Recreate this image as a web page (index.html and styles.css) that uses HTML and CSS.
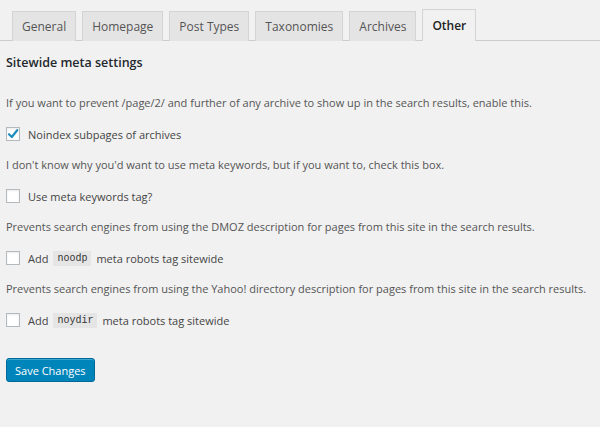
FILE: index.html
```html
<!DOCTYPE html>
<html>
<head>
<meta charset="utf-8">
<link rel="stylesheet" href="styles.css">
</head>
<body>
<div class="wrap">
  <nav class="tabs">
    <a class="tab">General</a>
    <a class="tab">Homepage</a>
    <a class="tab">Post Types</a>
    <a class="tab">Taxonomies</a>
    <a class="tab">Archives</a>
    <a class="tab active">Other</a>
  </nav>
  <div class="content">
    <h2 class="title">Sitewide meta settings</h2>
    <p class="desc">If you want to prevent /page/2/ and further of any archive to show up in the search results, enable this.</p>
    <label class="check"><span class="box checked"><svg viewBox="0 0 14 14" width="14" height="14"><path d="M3 7.2 L5.8 10 L11.2 3.2" fill="none" stroke="#1e8cbe" stroke-width="2.2" stroke-linecap="round" stroke-linejoin="round"/></svg></span>Noindex subpages of archives</label>
    <p class="desc">I don't know why you'd want to use meta keywords, but if you want to, check this box.</p>
    <label class="check"><span class="box"></span>Use meta keywords tag?</label>
    <p class="desc">Prevents search engines from using the DMOZ description for pages from this site in the search results.</p>
    <label class="check"><span class="box"></span>Add <code>noodp</code> meta robots tag sitewide</label>
    <p class="desc">Prevents search engines from using the Yahoo! directory description for pages from this site in the search results.</p>
    <label class="check"><span class="box"></span>Add <code>noydir</code> meta robots tag sitewide</label>
    <div class="actions"><button class="btn">Save Changes</button></div>
  </div>
</div>
</body>
</html>
```

FILE: styles.css
```css
html, body {
  margin: 0;
  padding: 0;
  background: #f1f1f1;
}
body {
  font-family: "Open Sans", "Noto Sans", sans-serif;
  color: #444;
  font-size: 11px;
}
.tabs {
  display: flex;
  align-items: flex-end;
  padding: 9px 0 0 6px;
  border-bottom: 1px solid #ccc;
  height: 31px;
}
.tab {
  display: block;
  margin-left: 6px;
  padding: 0 9px;
  height: 30px;
  line-height: 30px;
  font-size: 12px;
  font-weight: 500;
  color: #555;
  background: #e4e4e4;
  border: 1px solid #d4d4d4;
  border-bottom: none;
  margin-bottom: -1px;
  box-sizing: border-box;
}
.tab.active {
  background: #f1f1f1;
  color: #222;
  font-weight: 600;
  height: 32px;
  line-height: 32px;
}
.content {
  padding: 0 6px;
}
.title {
  margin: 0;
  padding-top: 13px;
  padding-bottom: 7px;
  font-size: 12.5px;
  font-weight: 600;
  color: #23282d;
  line-height: 18px;
}
.desc {
  margin: 0;
  line-height: 16px;
  padding-top: 16px;
  color: #555;
}
.check {
  display: flex;
  align-items: center;
  height: 16px;
  margin-top: 15px;
  margin-bottom: -1px;
  color: #444;
}
.box {
  width: 14px;
  height: 14px;
  box-sizing: border-box;
  border: 1px solid #b4b9be;
  background: #fff;
  margin-right: 8px;
  box-shadow: inset 0 1px 2px rgba(0,0,0,.08);
  display: flex;
}
.box svg { display: block; margin: -1px; }
code {
  font-family: "Liberation Mono", "DejaVu Sans Mono", monospace;
  font-size: 10px;
  background: #e5e5e5;
  padding: 2px 4px;
  margin: 0 5px;
  color: #333;
}
.actions {
  padding-top: 31px;
}
.btn {
  font-family: "Open Sans", sans-serif;
  font-size: 11px;
  height: 24px;
  padding: 0 8px;
  color: #fff;
  background: #0085ba;
  border: 1px solid #006799;
  border-radius: 3px;
  box-shadow: inset 0 1px 0 rgba(120,200,230,.5);
}
```
